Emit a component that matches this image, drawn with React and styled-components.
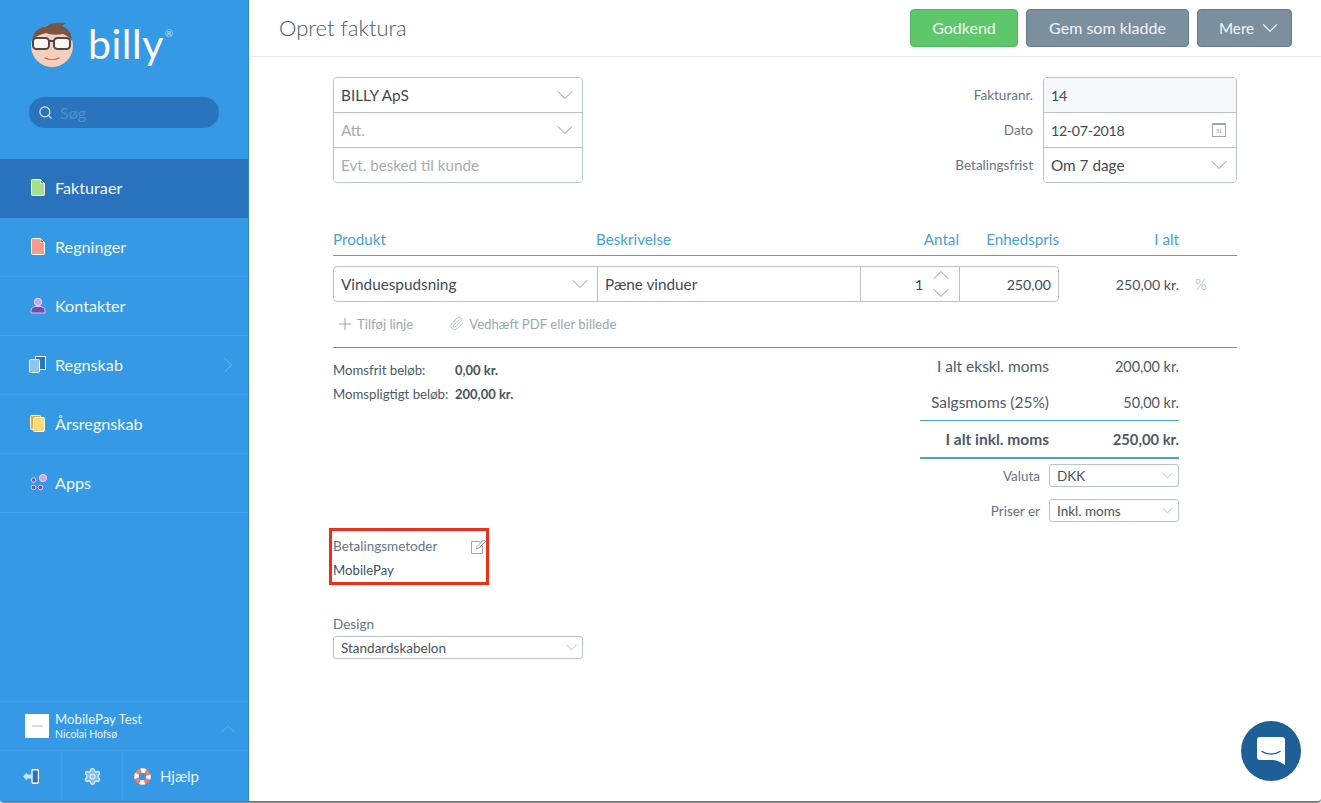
import React from "react";
import styled, { createGlobalStyle } from "styled-components";
import { ChevronDown, ChevronUp, ChevronRight, Plus, Paperclip, Search, Settings } from "lucide-react";

const GlobalStyle = createGlobalStyle`
  html, body {
    margin: 0;
    padding: 0;
    height: 803px;
    overflow: hidden;
    background: #ffffff;
  }
  * {
    box-sizing: border-box;
  }
  body {
    font-family: Lato, "Open Sans", sans-serif;
    color: #3f4a54;
  }
`;

const FileIcon = ({ fill, corner }) => (
  <svg width="14" height="17" viewBox="0 0 14 17">
    <path d="M1.5 0.5H9.5L13.5 4.5V15.5a1 1 0 0 1-1 1H1.5a1 1 0 0 1-1-1V1.5a1 1 0 0 1 1-1z" fill={fill} stroke="#fff" />
    <path d="M9.5 0.5V4.5H13.5z" fill={corner} stroke="#fff" strokeWidth="0.6" />
  </svg>
);

const ContactIcon = () => (
  <svg width="16" height="17" viewBox="0 0 16 17">
    <circle cx="8" cy="5" r="3.7" fill="#c9a8e8" stroke="#e6d8f5" />
    <path d="M1 16v-2.5C1 11 3.5 9.5 6 9.5h4c2.500 0 5 1.500 5 4V16z" fill="#6f4db0" stroke="#d9c9ef" />
  </svg>
);

const LedgerIcon = () => (
  <svg width="17" height="17" viewBox="0 0 17 17">
    <rect x="6.500" y="0.500" width="10" height="13" fill="#2a73bd" stroke="#fff" />
    <rect x="0.500" y="3.500" width="10" height="13" rx="1" fill="#8fc3f0" stroke="#fff" />
  </svg>
);

const AnnualIcon = () => (
  <svg width="15" height="17" viewBox="0 0 15 17">
    <rect x="0.500" y="0.500" width="10" height="14" rx="1" fill="#e8a93c" stroke="#fff" />
    <rect x="3.500" y="2.500" width="11" height="14" rx="1" fill="#fbdc7c" stroke="#fff" />
  </svg>
);

const AppsIcon = () => (
  <svg width="18" height="17" viewBox="0 0 18 17">
    <circle cx="14" cy="4" r="3.600" fill="#c9a8e8" stroke="#e6d8f5" />
    <circle cx="4.500" cy="6" r="2.300" fill="#7a4fb0" stroke="#e6d8f5" />
    <circle cx="4.500" cy="13.500" r="2.300" fill="#7a4fb0" stroke="#e6d8f5" />
    <circle cx="11.500" cy="13.500" r="2.300" fill="#7a4fb0" stroke="#e6d8f5" />
  </svg>
);

const BillyFace = () => (
  <svg width="44" height="46" viewBox="0 0 44 46">
    <circle cx="22" cy="25" r="21" fill="#f8cdbb" />
    <path d="M2 20C3 10 10 6 17 5c3-3 10-4 19-3-1 1-3 2-4 3 6 2 10 8 10 15-3-4-6-6-9-7-6 1-13 1-17-1-4 1-11 3-14 8z" fill="#7a5544" />
    <rect x="3" y="17" width="16" height="11" rx="3.500" fill="#fdf5f1" stroke="#4a4a4a" strokeWidth="2" />
    <rect x="24" y="17" width="16" height="11" rx="3.500" fill="#fdf5f1" stroke="#4a4a4a" strokeWidth="2" />
    <path d="M19 20h5" stroke="#4a4a4a" strokeWidth="2" />
    <path d="M15 37c4 2 10 2 14 0" fill="none" stroke="#b5654f" strokeWidth="1.200" strokeLinecap="round" />
  </svg>
);

const LogoutIcon = () => (
  <svg width="16" height="15" viewBox="0 0 16 15">
    <rect x="9" y="0.750" width="6.500" height="13.500" rx="1" fill="#2a73bd" stroke="#fff" strokeWidth="1.300" />
    <path d="M0 7.500L4 3.500v2h5v4H4v2z" fill="#c9e2f8" />
  </svg>
);

const HelpIcon = () => (
  <svg width="17" height="17" viewBox="0 0 17 17">
    <circle cx="8.500" cy="8.500" r="6" fill="none" stroke="#f08066" strokeWidth="4.500" />
    <circle cx="8.500" cy="8.500" r="6" fill="none" stroke="#fff" strokeWidth="4.500" strokeDasharray="4.700 4.700" strokeDashoffset="2.300" />
  </svg>
);

const CalendarIcon = () => (
  <svg width="14" height="14" viewBox="0 0 14 14">
    <rect x="0.500" y="0.500" width="13" height="13" fill="#fff" stroke="#9aa7b1" />
    <path d="M0.500 1.500h13" stroke="#9aa7b1" />
    <text x="7" y="10" textAnchor="middle" fontSize="6" fontFamily="Liberation Serif, serif" fill="#7f8e9a">31</text>
  </svg>
);

const EditIcon = () => (
  <svg width="15" height="15" viewBox="0 0 15 15" fill="none" stroke="#9aa7b1">
    <path d="M9.500 2.500H0.500V14.500H11.500V6.500" />
    <path d="M5.500 10L6 7.500 12.500 1 14.500 2.500 8 9z" fill="#fff" />
  </svg>
);

const ChatIcon = () => (
  <svg width="30" height="30" viewBox="0 0 30 30">
    <path d="M4 1h22a3 3 0 0 1 3 3v25l-6-3.500c-2-1-4-1.500-6-1.500H4a3 3 0 0 1-3-3V4a3 3 0 0 1 3-3z" fill="#fff" />
    <path d="M6 15.500c5 3.500 13 3.500 18 0" fill="none" stroke="#1d5f96" strokeWidth="1.400" strokeLinecap="round" />
  </svg>
);

const navItems = [
  { label: "Fakturaer", icon: <FileIcon fill="#a5e08f" corner="#5cb85c" />, active: true },
  { label: "Regninger", icon: <FileIcon fill="#f79c8b" corner="#c9503f" /> },
  { label: "Kontakter", icon: <ContactIcon /> },
  { label: "Regnskab", icon: <LedgerIcon />, more: true },
  { label: "Årsregnskab", icon: <AnnualIcon /> },
  { label: "Apps", icon: <AppsIcon /> },
];

const App = () => {
  return (
    <Page>
      <GlobalStyle />
      <Sidebar>
        <LogoBlock>
          <BillyFace />
          <LogoText>billy</LogoText>
          <LogoMark>®</LogoMark>
        </LogoBlock>
        <SearchWrap>
          <SearchPill>
            <Search size={15} color="#dcedfb" />
            <SearchHint>Søg</SearchHint>
          </SearchPill>
        </SearchWrap>
        <NavList>
          {navItems.map((item) => (
            <NavItem key={item.label} $active={item.active}>
              <NavIcon>{item.icon}</NavIcon>
              <NavLabel>{item.label}</NavLabel>
              {item.more && (
                <NavChevron>
                  <ChevronRight size={28} strokeWidth={0.900} />
                </NavChevron>
              )}
            </NavItem>
          ))}
        </NavList>
        <SideFooter>
          <CompanyRow>
            <CompanyLogo>
              <CompanyDot />
            </CompanyLogo>
            <CompanyText>
              <CompanyName>MobilePay Test</CompanyName>
              <UserName>Nicolai Hofsø</UserName>
            </CompanyText>
            <CompanyChevron>
              <ChevronUp size={26} strokeWidth={0.900} />
            </CompanyChevron>
          </CompanyRow>
          <ToolRow>
            <ToolCell $w={62}>
              <LogoutIcon />
            </ToolCell>
            <ToolCell $w={61}>
              <Settings size={19} strokeWidth={1.700} color="#dcedfb" fill="#7fbcec" />
            </ToolCell>
            <HelpCell>
              <HelpIcon />
              <HelpLabel>Hjælp</HelpLabel>
            </HelpCell>
          </ToolRow>
        </SideFooter>
      </Sidebar>

      <Main>
        <TopBar>
          <PageTitle>Opret faktura</PageTitle>
          <TopActions>
            <ActionButton $bg="#5ec76b" $edge="#51b45e" $w={108}>Godkend</ActionButton>
            <ActionButton $bg="#7c8f9e" $edge="#65798a" $w={163}>Gem som kladde</ActionButton>
            <MoreButton $bg="#7c8f9e" $edge="#65798a" $w={95}>
              Mere
              <ChevronDown size={26} strokeWidth={1} />
            </MoreButton>
          </TopActions>
        </TopBar>

        <Content>
          <HeadForm>
            <FieldStack $w={250}>
              <FieldRow>
                <FieldText>BILLY ApS</FieldText>
                <FieldChevron />
              </FieldRow>
              <FieldRow>
                <FieldText $muted>Att.</FieldText>
                <FieldChevron />
              </FieldRow>
              <FieldRow>
                <FieldText $muted>Evt. besked til kunde</FieldText>
              </FieldRow>
            </FieldStack>
            <MetaBlock>
              <MetaLabels>
                <MetaLabel>Fakturanr.</MetaLabel>
                <MetaLabel>Dato</MetaLabel>
                <MetaLabel>Betalingsfrist</MetaLabel>
              </MetaLabels>
              <FieldStack $w={194}>
                <FieldRow $tint>
                  <NumberText>14</NumberText>
                </FieldRow>
                <FieldRow>
                  <NumberText>12-07-2018</NumberText>
                  <CalendarSlot>
                    <CalendarIcon />
                  </CalendarSlot>
                </FieldRow>
                <FieldRow>
                  <FieldText>Om 7 dage</FieldText>
                  <FieldChevron />
                </FieldRow>
              </FieldStack>
            </MetaBlock>
          </HeadForm>

          <LineHead>
            <HeadCell $w={263}>Produkt</HeadCell>
            <HeadCell $w={264}>Beskrivelse</HeadCell>
            <HeadCell $w={99} $right>Antal</HeadCell>
            <HeadCell $w={100} $right>Enhedspris</HeadCell>
            <HeadCell $w={120} $right>I alt</HeadCell>
          </LineHead>

          <LineRow>
            <LineInputs>
              <LineCell $w={264}>
                <FieldText>Vinduespudsning</FieldText>
                <FieldChevron />
              </LineCell>
              <LineCell $w={263}>
                <FieldText>Pæne vinduer</FieldText>
              </LineCell>
              <LineCell $w={99} $right>
                <NumberText>1</NumberText>
                <Stepper>
                  <ChevronUp size={28} strokeWidth={0.800} />
                  <ChevronDown size={28} strokeWidth={0.800} />
                </Stepper>
              </LineCell>
              <LineCell $w={98} $right $last>
                <PriceText>250,00</PriceText>
              </LineCell>
            </LineInputs>
            <LineTotal>250,00 kr.</LineTotal>
            <PercentMark>%</PercentMark>
          </LineRow>

          <LineTools>
            <ToolLink>
              <PlusGlyph size={20} strokeWidth={1} color="#8b97a1" />
              Tilføj linje
            </ToolLink>
            <ToolLink>
              <Paperclip size={15} strokeWidth={1.100} color="#9aa7b1" />
              Vedhæft PDF eller billede
            </ToolLink>
          </LineTools>

          <SummaryRow>
            <VatList>
              <VatRow>
                <VatLabel>Momsfrit beløb:</VatLabel>
                <VatValue>0,00 kr.</VatValue>
              </VatRow>
              <VatRow>
                <VatLabel>Momspligtigt beløb:</VatLabel>
                <VatValue>200,00 kr.</VatValue>
              </VatRow>
            </VatList>
            <Totals>
              <TotalRow>
                <TotalLabel>I alt ekskl. moms</TotalLabel>
                <TotalValue>200,00 kr.</TotalValue>
              </TotalRow>
              <SubtotalRow>
                <TotalLabel>Salgsmoms (25%)</TotalLabel>
                <TotalValue>50,00 kr.</TotalValue>
              </SubtotalRow>
              <GrandRow>
                <TotalLabel $bold>I alt inkl. moms</TotalLabel>
                <TotalValue $bold>250,00 kr.</TotalValue>
              </GrandRow>
              <SmallSelectRow>
                <SmallLabel>Valuta</SmallLabel>
                <SmallSelect $w={130}>
                  DKK
                  <SelectChevron />
                </SmallSelect>
              </SmallSelectRow>
              <SmallSelectRow>
                <SmallLabel>Priser er</SmallLabel>
                <SmallSelect $w={130}>
                  Inkl. moms
                  <SelectChevron />
                </SmallSelect>
              </SmallSelectRow>
            </Totals>
          </SummaryRow>

          <PaymentBox>
            <PaymentHead>
              <PaymentTitle>Betalingsmetoder</PaymentTitle>
              <EditIcon />
            </PaymentHead>
            <PaymentValue>MobilePay</PaymentValue>
          </PaymentBox>

          <DesignLabel>Design</DesignLabel>
          <SmallSelect $w={250}>
            Standardskabelon
            <SelectChevron />
          </SmallSelect>
        </Content>

        <ChatBubble>
          <ChatIcon />
        </ChatBubble>
      </Main>
    </Page>
  );
};

const FieldChevron = () => (
  <ChevronSlot>
    <ChevronDown size={28} strokeWidth={0.800} color="#7f8e9a" />
  </ChevronSlot>
);

const SelectChevron = () => <ChevronDown size={19} strokeWidth={0.900} color="#9aa7b1" />;

const Page = styled.div`
  display: flex;
  position: relative;
  width: 1321px;
  height: 801px;
  border-radius: 0 0 4px 4px;
  box-shadow: 0 2px 2px rgba(70, 70, 70, 0.8);
`;

const Sidebar = styled.aside`
  display: flex;
  flex-direction: column;
  width: 249px;
  flex-shrink: 0;
  background: #3699e6;
  border-right: 1px solid #2f86cb;
`;

const LogoBlock = styled.div`
  display: flex;
  align-items: center;
  height: 97px;
  padding: 0 0 9px 30px;
  flex-shrink: 0;
`;

const LogoText = styled.span`
  margin-left: 14px;
  font-size: 41px;
  font-weight: 400;
  line-height: 50px;
  letter-spacing: 0.5px;
  color: #ffffff;
`;

const LogoMark = styled.span`
  align-self: flex-start;
  margin-top: 27px;
  margin-left: 1px;
  font-size: 10px;
  color: #bfe0f8;
`;

const SearchWrap = styled.div`
  height: 62px;
  padding: 0 29px;
  flex-shrink: 0;
`;

const SearchPill = styled.div`
  display: flex;
  align-items: center;
  gap: 7px;
  width: 190px;
  height: 31px;
  padding-left: 9px;
  border-radius: 16px;
  background: #2a74be;
`;

const SearchHint = styled.span`
  font-size: 16px;
  color: #4f8fcf;
`;

const NavList = styled.nav`
  display: flex;
  flex-direction: column;
`;

const NavItem = styled.div`
  display: flex;
  align-items: center;
  height: 59px;
  padding: 0 0 1px 28px;
  background: ${(p) => (p.$active ? "#2a73bc" : "transparent")};
  border-bottom: 1px solid ${(p) => (p.$active ? "#2a73bc" : "#439fe8")};
`;

const NavIcon = styled.span`
  display: flex;
  justify-content: center;
  width: 19px;
`;

const NavLabel = styled.span`
  margin-left: 8px;
  margin-bottom: 1px;
  font-size: 16.200px;
  color: #f2f9fe;
`;

const NavChevron = styled.span`
  display: flex;
  margin-left: auto;
  margin-right: 6px;
  color: #67b2ec;
`;

const SideFooter = styled.div`
  margin-top: auto;
  border-top: 1px solid #439fe8;
`;

const CompanyRow = styled.div`
  display: flex;
  align-items: center;
  height: 49px;
  padding-left: 25px;
  border-bottom: 1px solid #439fe8;
`;

const CompanyLogo = styled.div`
  display: flex;
  align-items: center;
  justify-content: center;
  width: 24px;
  height: 24px;
  background: #ffffff;
`;

const CompanyDot = styled.span`
  width: 11px;
  height: 2px;
  background: #d3d6f0;
`;

const CompanyText = styled.div`
  display: flex;
  flex-direction: column;
  margin-left: 6px;
`;

const CompanyName = styled.span`
  font-size: 13.200px;
  line-height: 16px;
  color: #eaf5fd;
`;

const UserName = styled.span`
  font-size: 10.500px;
  line-height: 14px;
  color: #eaf5fd;
`;

const CompanyChevron = styled.span`
  display: flex;
  margin-left: auto;
  margin-top: 6px;
  margin-right: 7px;
  color: #67b2ec;
`;

const ToolRow = styled.div`
  display: flex;
  height: 50px;
`;

const ToolCell = styled.div`
  display: flex;
  align-items: center;
  justify-content: center;
  width: ${(p) => p.$w}px;
  border-right: 1px solid #439fe8;
`;

const HelpCell = styled.div`
  display: flex;
  flex: 1;
  align-items: center;
  gap: 9px;
  padding-left: 11px;
`;

const HelpLabel = styled.span`
  font-size: 15px;
  color: #e6f3fd;
`;

const Main = styled.main`
  position: relative;
  flex: 1;
  min-width: 0;
  border-radius: 0 0 4px 0;
  background: #ffffff;
`;

const TopBar = styled.header`
  display: flex;
  align-items: center;
  justify-content: space-between;
  height: 57px;
  padding: 0 29px 0 30px;
  border-bottom: 1px solid #e4e7ea;
`;

const PageTitle = styled.h1`
  margin: -2px 0 0;
  font-size: 22px;
  font-weight: 300;
  color: #4d5a65;
`;

const TopActions = styled.div`
  display: flex;
  gap: 8px;
  margin-top: -1px;
`;

const ActionButton = styled.div`
  display: flex;
  align-items: center;
  justify-content: center;
  width: ${(p) => p.$w}px;
  height: 38px;
  border: 1px solid ${(p) => p.$edge};
  border-radius: 4px;
  background: ${(p) => p.$bg};
  font-size: 16px;
  color: #f2f5f7;
`;

const MoreButton = styled(ActionButton)`
  justify-content: flex-start;
  gap: 3px;
  padding-left: 21px;
  font-size: 15.200px;
`;

const Content = styled.div`
  width: 904px;
  margin-left: 84px;
  padding-top: 20px;
`;

const HeadForm = styled.div`
  display: flex;
  justify-content: space-between;
`;

const FieldStack = styled.div`
  width: ${(p) => p.$w}px;
  border: 1px solid #b9c3cb;
  border-radius: 4px;
  overflow: hidden;
`;

const FieldRow = styled.div`
  display: flex;
  align-items: center;
  justify-content: space-between;
  height: 35px;
  padding: 0 7px;
  background: ${(p) => (p.$tint ? "#f5f9fb" : "#ffffff")};
  border-top: 1px solid #b9c3cb;
  &:first-child {
    height: 34px;
    border-top: none;
  }
`;

const FieldText = styled.span`
  font-size: ${(p) => (p.$muted ? "15.200px" : "15.300px")};
  color: ${(p) => (p.$muted ? "#a3adb5" : "#3f4a54")};
`;

const NumberText = styled.span`
  font-size: 14.200px;
  letter-spacing: -0.3px;
  color: #3f4a54;
`;

const PriceText = styled.span`
  font-size: 14.200px;
  color: #3f4a54;
`;

const ChevronSlot = styled.span`
  display: flex;
  margin-right: -4px;
`;

const CalendarSlot = styled.span`
  display: flex;
  margin-right: 3px;
`;

const MetaBlock = styled.div`
  display: flex;
  gap: 10px;
`;

const MetaLabels = styled.div`
  display: flex;
  flex-direction: column;
`;

const MetaLabel = styled.span`
  height: 35px;
  font-size: 13.500px;
  line-height: 37px;
  text-align: right;
  color: #67747f;
`;

const LineHead = styled.div`
  display: flex;
  align-items: center;
  height: 31px;
  margin-top: 42px;
  padding-bottom: 3px;
  border-bottom: 1px solid #4f9fd6;
`;

const HeadCell = styled.span`
  width: ${(p) => p.$w}px;
  font-size: 15.200px;
  color: #46a1dc;
  text-align: ${(p) => (p.$right ? "right" : "left")};
`;

const LineRow = styled.div`
  display: flex;
  align-items: center;
  margin-top: 10px;
`;

const LineInputs = styled.div`
  display: flex;
  height: 36px;
  border: 1px solid #b9c3cb;
  border-radius: 4px;
`;

const LineCell = styled.div`
  display: flex;
  align-items: center;
  justify-content: ${(p) => (p.$right ? "flex-end" : "space-between")};
  width: ${(p) => p.$w}px;
  padding: 0 7px;
  border-right: ${(p) => (p.$last ? "none" : "1px solid #b9c3cb")};
`;

const Stepper = styled.div`
  display: flex;
  flex-direction: column;
  align-items: center;
  margin-left: 4px;
  margin-right: -3px;
  color: #7f8e9a;
  & svg {
    margin: -5px 0;
  }
`;

const LineTotal = styled.span`
  width: 120px;
  font-size: 14.200px;
  text-align: right;
  color: #46525c;
`;

const PercentMark = styled.span`
  margin-left: 16px;
  font-size: 15px;
  font-weight: 300;
  color: #9aa7b1;
`;

const LineTools = styled.div`
  display: flex;
  align-items: center;
  gap: 36px;
  height: 46px;
  padding: 0 0 2px 2px;
  border-bottom: 1px solid #4f9fd6;
`;

const ToolLink = styled.span`
  display: flex;
  align-items: center;
  gap: 5px;
  font-size: 13.200px;
  color: #9aa7b1;
`;

const PlusGlyph = styled(Plus)`
  margin-right: -3px;
`;

const SummaryRow = styled.div`
  display: flex;
  justify-content: space-between;
  padding-right: 58px;
`;

const VatList = styled.div`
  display: flex;
  flex-direction: column;
  gap: 8px;
  padding-top: 14px;
`;

const VatRow = styled.div`
  display: flex;
  height: 16px;
  line-height: 16px;
  font-size: 13.200px;
`;

const VatLabel = styled.span`
  width: 122px;
  white-space: nowrap;
  color: #4d5a65;
`;

const VatValue = styled.span`
  font-size: 13px;
  font-weight: 700;
  color: #46525c;
`;

const Totals = styled.div`
  display: flex;
  flex-direction: column;
  width: 259px;
`;

const TotalRow = styled.div`
  display: flex;
  align-items: center;
  justify-content: space-between;
  height: 36px;
`;

const SubtotalRow = styled(TotalRow)`
  height: 37px;
  border-bottom: 1px solid #4f9fd6;
`;

const GrandRow = styled(TotalRow)`
  height: 38px;
  border-bottom: 2px solid #4f9fd6;
`;

const TotalLabel = styled.span`
  width: 129px;
  font-size: 15.500px;
  font-weight: ${(p) => (p.$bold ? 700 : 400)};
  text-align: right;
  white-space: nowrap;
  color: #4d5a65;
`;

const TotalValue = styled.span`
  font-size: ${(p) => (p.$bold ? "14.800px" : "14.400px")};
  font-weight: ${(p) => (p.$bold ? 700 : 400)};
  color: #4d5a65;
`;

const SmallSelectRow = styled.div`
  display: flex;
  align-items: center;
  justify-content: flex-end;
  gap: 9px;
  height: 23px;
  margin-top: 5px;
  & + & {
    margin-top: 12px;
  }
`;

const SmallLabel = styled.span`
  font-size: 13.500px;
  color: #67747f;
`;

const SmallSelect = styled.div`
  display: flex;
  align-items: center;
  justify-content: space-between;
  width: ${(p) => p.$w}px;
  height: 23px;
  padding: 0 1px 0 7px;
  border: 1px solid #b9c3cb;
  border-radius: 3px;
  font-size: 13.500px;
  color: #46525c;
`;

const PaymentBox = styled.div`
  width: 160px;
  height: 57px;
  margin: 6px 0 0 -4px;
  padding: 7px 0 0 1px;
  border: 3px solid #e8301a;
`;

const PaymentHead = styled.div`
  display: flex;
  align-items: center;
  justify-content: space-between;
`;

const PaymentTitle = styled.span`
  font-size: 13.500px;
  color: #67747f;
`;

const PaymentValue = styled.div`
  margin-top: 8px;
  font-size: 13.200px;
  color: #46525c;
`;

const DesignLabel = styled.div`
  margin: 31px 0 4px;
  font-size: 13.500px;
  line-height: 16px;
  color: #67747f;
`;

const ChatBubble = styled.div`
  position: absolute;
  right: 20px;
  bottom: 20px;
  display: flex;
  align-items: center;
  justify-content: center;
  width: 60px;
  height: 60px;
  border-radius: 50%;
  background: #1d5f96;
`;

export default App;
